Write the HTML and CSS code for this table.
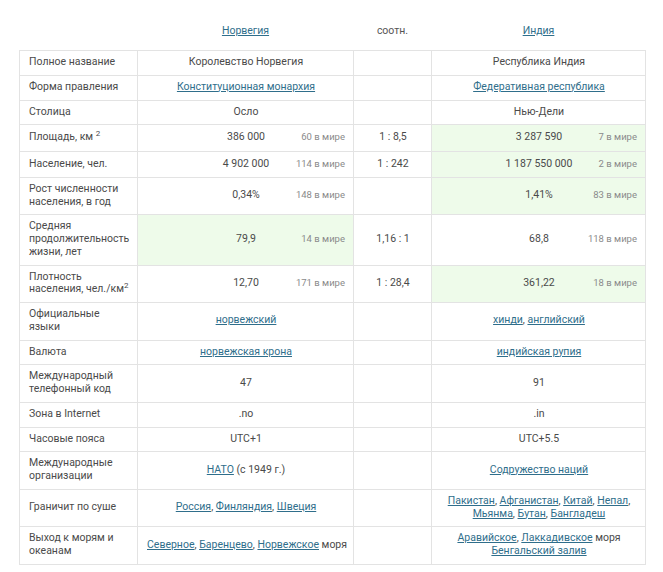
FILE: index.html
```html
<!DOCTYPE html>
<html lang="ru">
<head>
<meta charset="utf-8">
<title>Норвегия и Индия</title>
<link rel="stylesheet" href="styles.css">
</head>
<body>
<table class="compare">
  <colgroup>
    <col class="c-label">
    <col class="c-country">
    <col class="c-ratio">
    <col class="c-country2">
  </colgroup>
  <thead>
    <tr>
      <th></th>
      <th><a href="#">Норвегия</a></th>
      <th class="ratio-head">соотн.</th>
      <th><a href="#">Индия</a></th>
    </tr>
  </thead>
  <tbody>
    <tr>
      <td class="label">Полное название</td>
      <td>Королевство Норвегия</td>
      <td></td>
      <td>Республика Индия</td>
    </tr>
    <tr>
      <td class="label">Форма правления</td>
      <td><a href="#">Конституционная монархия</a></td>
      <td></td>
      <td><a href="#">Федеративная республика</a></td>
    </tr>
    <tr>
      <td class="label">Столица</td>
      <td>Осло</td>
      <td></td>
      <td>Нью-Дели</td>
    </tr>
    <tr class="statrow">
      <td class="label">Площадь, км <sup>2</sup></td>
      <td><div class="stat"><span class="v">386 000</span><span class="rank">60 в мире</span></div></td>
      <td>1 : 8,5</td>
      <td class="hl"><div class="stat"><span class="v">3 287 590</span><span class="rank">7 в мире</span></div></td>
    </tr>
    <tr class="statrow">
      <td class="label">Население, чел.</td>
      <td><div class="stat"><span class="v">4 902 000</span><span class="rank">114 в мире</span></div></td>
      <td>1 : 242</td>
      <td class="hl"><div class="stat"><span class="v">1 187 550 000</span><span class="rank">2 в мире</span></div></td>
    </tr>
    <tr>
      <td class="label">Рост численности населения, в год</td>
      <td><div class="stat"><span class="v">0,34%</span><span class="rank">148 в мире</span></div></td>
      <td></td>
      <td class="hl"><div class="stat"><span class="v">1,41%</span><span class="rank">83 в мире</span></div></td>
    </tr>
    <tr>
      <td class="label">Средняя продолжительность жизни, лет</td>
      <td class="hl"><div class="stat"><span class="v">79,9</span><span class="rank">14 в мире</span></div></td>
      <td>1,16 : 1</td>
      <td><div class="stat"><span class="v">68,8</span><span class="rank">118 в мире</span></div></td>
    </tr>
    <tr>
      <td class="label">Плотность населения, чел./км<sup>2</sup></td>
      <td><div class="stat"><span class="v">12,70</span><span class="rank">171 в мире</span></div></td>
      <td>1 : 28,4</td>
      <td class="hl"><div class="stat"><span class="v">361,22</span><span class="rank">18 в мире</span></div></td>
    </tr>
    <tr>
      <td class="label">Официальные языки</td>
      <td><a href="#">норвежский</a></td>
      <td></td>
      <td><a href="#">хинди</a>, <a href="#">английский</a></td>
    </tr>
    <tr>
      <td class="label">Валюта</td>
      <td><a href="#">норвежская крона</a></td>
      <td></td>
      <td><a href="#">индийская рупия</a></td>
    </tr>
    <tr>
      <td class="label">Международный телефонный код</td>
      <td>47</td>
      <td></td>
      <td>91</td>
    </tr>
    <tr>
      <td class="label">Зона в Internet</td>
      <td>.no</td>
      <td></td>
      <td>.in</td>
    </tr>
    <tr>
      <td class="label">Часовые пояса</td>
      <td>UTC+1</td>
      <td></td>
      <td>UTC+5.5</td>
    </tr>
    <tr>
      <td class="label">Международные организации</td>
      <td><a href="#">НАТО</a> (с 1949 г.)</td>
      <td></td>
      <td><a href="#">Содружество наций</a></td>
    </tr>
    <tr>
      <td class="label">Граничит по суше</td>
      <td><a href="#">Россия</a>, <a href="#">Финляндия</a>, <a href="#">Швеция</a></td>
      <td></td>
      <td><a href="#">Пакистан</a>, <a href="#">Афганистан</a>, <a href="#">Китай</a>, <a href="#">Непал</a>, <a href="#">Мьянма</a>, <a href="#">Бутан</a>, <a href="#">Бангладеш</a></td>
    </tr>
    <tr>
      <td class="label">Выход к морям и океанам</td>
      <td class="nowrap"><a href="#">Северное</a>, <a href="#">Баренцево</a>, <a href="#">Норвежское</a> моря</td>
      <td></td>
      <td><a href="#">Аравийское</a>, <a href="#">Лаккадивское</a> моря<br><a href="#">Бенгальский залив</a></td>
    </tr>
  </tbody>
</table>
</body>
</html>
```
FILE: styles.css
```css
body {
  margin: 0;
  background: #ffffff;
  font-family: Roboto, "Liberation Sans", sans-serif;
  font-size: 10.5px;
  color: #4a4a4a;
}

.compare {
  border-collapse: collapse;
  table-layout: fixed;
  width: 626px;
  margin-left: 19px;
}

.c-label { width: 118px; }
.c-country { width: 216px; }
.c-ratio { width: 78px; }
.c-country2 { width: 214px; }

.compare th {
  padding: 24px 0 13px;
  line-height: 13px;
  font-weight: normal;
  text-align: center;
  vertical-align: bottom;
}

.ratio-head {
  color: #555555;
}

.compare td {
  border: 1px solid #e3e3e3;
  padding: 5px 8px 6px 9px;
  line-height: 12.75px;
  text-align: center;
  vertical-align: middle;
}

.statrow td {
  padding-top: 6px;
  padding-bottom: 6.5px;
}

.compare td.label {
  text-align: left;
}

.compare td.hl {
  background: #eefbea;
}

.compare td.nowrap {
  white-space: nowrap;
}

sup {
  font-size: 8px;
  line-height: 0;
  vertical-align: 4px;
}

a {
  color: #2f6e8b;
  text-decoration: underline;
}

.stat {
  display: grid;
  grid-template-columns: 1fr auto 1fr;
  align-items: baseline;
}

.stat .v {
  grid-column: 2;
}

.stat .rank {
  grid-column: 3;
  justify-self: end;
  font-size: 9.5px;
  color: #8a8a8a;
  white-space: nowrap;
}
```
